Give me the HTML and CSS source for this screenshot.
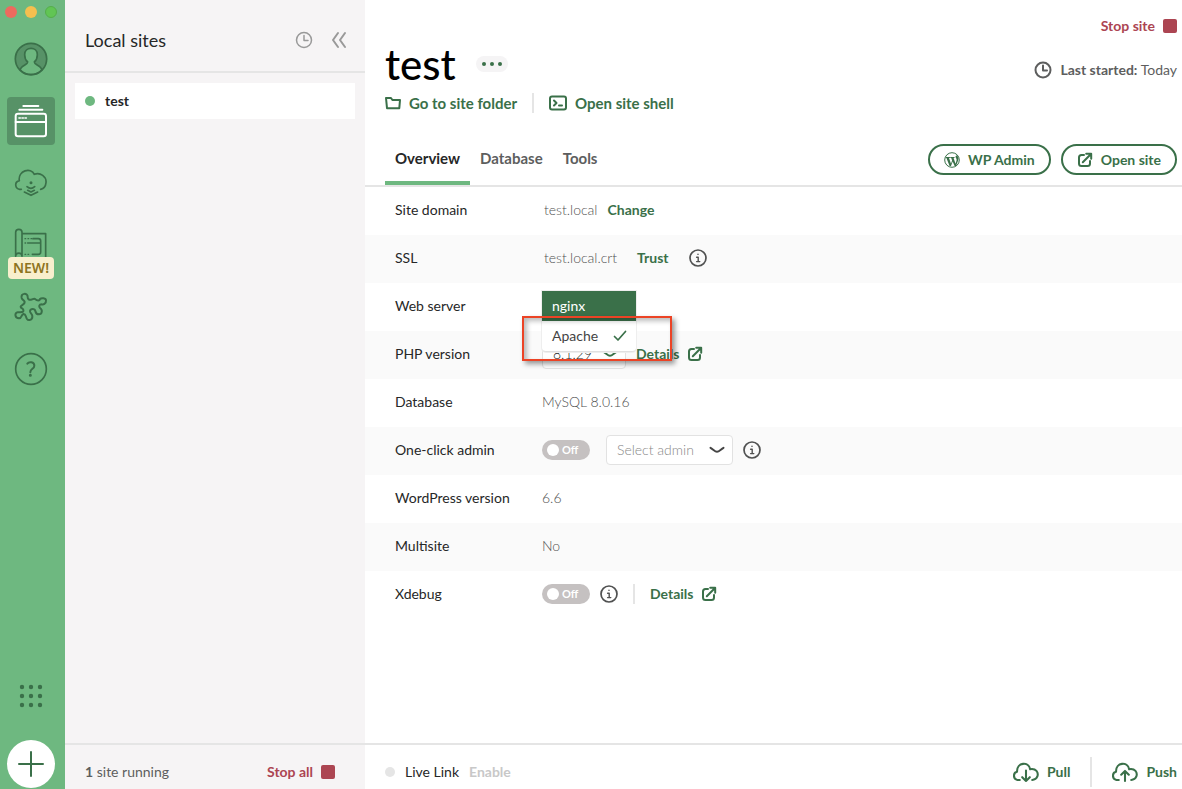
FILE: index.html
```html
<!DOCTYPE html>
<html lang="en">
<head>
<meta charset="utf-8">
<meta name="viewport" content="width=device-width, initial-scale=1">
<title>Local – test</title>
<link rel="stylesheet" href="styles.css">
</head>
<body>
<svg class="defs" width="0" height="0" aria-hidden="true">
  <symbol id="clock" viewBox="0 0 18 18"><circle cx="9" cy="9" r="7.5"/><path d="M9 4.5V9.5H13"/></symbol>
  <symbol id="info" viewBox="0 0 18 18"><circle cx="9" cy="9" r="8"/><path d="M7.6 8.2H9.2V12.6M7.6 12.6H10.8M9 5.3V5.4" stroke-width="1.4"/></symbol>
  <symbol id="external" viewBox="0 0 16 16"><path d="M7 3H4.5Q2 3 2 5.5V11.5Q2 14 4.5 14H10.5Q13 14 13 11.5V9M5.8 10.2L14 2M9.2 1.8H14.2V6.8"/></symbol>
  <symbol id="chevron" viewBox="0 0 16 8"><path d="M1.5 1.8C4 3.2 6 5.8 8 5.8S12 3.2 14.5 1.8"/></symbol>
</svg>
<div class="app">
  <nav class="rail" aria-label="Main">
    <div class="lights"><span class="light light-red"></span><span class="light light-yellow"></span><span class="light light-green"></span></div>
    <button class="rail-button" aria-label="Account">
      <svg width="34" height="34" viewBox="43 127 102 102"><circle cx="94" cy="178" r="47" fill="#579267"/><path d="M62 211C62 198 84 196 84 187C76 180 75 174 75 165C75 140 113 140 113 165C113 174 112 180 104 187C104 196 126 198 126 211Q112 225 94 225T62 211Z" fill="#6eb880" stroke-width="5"/><circle cx="94" cy="178" r="47" stroke-width="5"/></svg>
    </button>
    <button class="rail-button active" aria-label="Local sites">
      <svg width="34" height="34" viewBox="43 312 102 102"><rect x="48" y="341" width="91" height="68" rx="7" stroke-width="6"/><path d="M48 366H139M59 329H128M71 318H116" stroke-width="6"/><path d="M58 354H62M67 354H71M76 354H80" stroke-width="5"/></svg>
    </button>
    <button class="rail-button" aria-label="Cloud backups">
      <svg width="34" height="28" viewBox="43 507 102 84" stroke-width="5"><path d="M65 568H60C46 566 43 546 59 542C54 512 94 500 104 523C122 516 141 530 139 548C138 560 132 566 123 568M82 560Q94 570 105 560M74 576L94 586L114 576M84 571L94 576L104 571"/><circle cx="94" cy="548" r="2"/></svg>
    </button>
    <button class="rail-button" aria-label="Blueprints, new">
      <svg width="34" height="34" viewBox="43 55 102 102" stroke-width="5"><path d="M48 140V68C48 56 67 56 67 68V140M48 140C48 127 67 127 67 140M67 72H138V142M84 100H122M100 87H116Q123 87 123 94V127Q123 134 116 134H98"/><path d="M76 87H78M85 87H87M94 87H96M76 100H78M76 134H78M85 134H87" stroke-width="4"/></svg>
      <span class="new-badge">NEW!</span>
    </button>
    <button class="rail-button" aria-label="Add-ons">
      <svg width="34" height="30" viewBox="43 245 102 90" stroke-width="6"><path d="M66 263C62 247 85 247 84 260C84 267 89 269 94 268C99 268 101 264 106 266C113 272 120 272 121 266C125 262 139 263 139 270C140 281 130 284 126 282C118 282 117 288 121 293C130 299 127 312 118 312C110 312 108 308 107 302C105 294 93 294 91 302C90 308 99 311 98 319C98 329 86 332 82 326C77 318 79 310 71 311C64 313 67 324 58 324C45 324 44 307 54 306C64 306 73 306 71 299C69 292 63 295 63 289C64 283 76 283 75 275C74 269 68 270 66 263Z"/></svg>
    </button>
    <button class="rail-button" aria-label="Help">
      <svg width="34" height="34" viewBox="43 426 102 102"><circle cx="94" cy="477" r="46" stroke-width="5"/><path d="M83 461C88 454 104 455 104 467C104 477 92 476 92 487" stroke-width="6"/><circle cx="92" cy="496" r="2" stroke-width="5"/></svg>
    </button>
    <div class="rail-bottom">
      <button class="rail-button" aria-label="Apps">
        <svg width="24" height="24" viewBox="0 0 24 24" stroke-width="4.4"><path d="M3 3h.01M12 3h.01M21 3h.01M3 12h.01M12 12h.01M21 12h.01M3 21h.01M12 21h.01M21 21h.01"/></svg>
      </button>
      <button class="add" aria-label="Create site"><svg width="26" height="26" viewBox="0 0 26 26"><path d="M13 1V25M1 13H25"/></svg></button>
    </div>
  </nav>

  <aside class="sidebar">
    <header class="sidebar-head">
      <h2>Local sites</h2>
      <button aria-label="Recent"><svg class="icon thin" width="18" height="18"><use href="#clock"/></svg></button>
      <button aria-label="Collapse sidebar"><svg class="icon" width="16" height="18" viewBox="0 0 16 18"><path d="M7 2L2 9L7 16M14 2L9 9L14 16"/></svg></button>
    </header>
    <ul class="sites"><li><a href="#test"><span class="dot running"></span>test</a></li></ul>
    <footer class="sidebar-foot"><span><b>1</b> site running</span><button class="stop">Stop all<span class="square"></span></button></footer>
  </aside>

  <main class="main">
    <header class="site-head">
      <div class="identity">
        <div class="title-row"><h1>test</h1><button class="more" aria-label="More options"><svg width="22" height="6" viewBox="0 0 22 6"><circle cx="3" cy="3" r="2"/><circle cx="11" cy="3" r="2"/><circle cx="19" cy="3" r="2"/></svg></button></div>
        <div class="shortcuts">
          <a class="link" href="#folder"><svg class="icon" width="16" height="14" viewBox="0 0 16 14"><path d="M2 12.2L1 2H6L7.4 4H15L14.3 12.2Z"/></svg>Go to site folder</a>
          <span class="divider"></span>
          <a class="link" href="#shell"><svg class="icon" width="18" height="16" viewBox="0 0 18 16"><rect x="1" y="1.5" width="16" height="13" rx="2"/><path d="M5 5.5L7.5 8L5 10.5M10 10.5H13"/></svg>Open site shell</a>
        </div>
      </div>
      <div class="status">
        <button class="stop">Stop site<span class="square"></span></button>
        <p class="started"><svg class="icon" width="18" height="18"><use href="#clock"/></svg><span><b>Last started:</b> Today</span></p>
      </div>
    </header>

    <div class="tabbar">
      <div class="tabs" role="tablist">
        <button role="tab" aria-selected="true">Overview</button><button role="tab" aria-selected="false">Database</button><button role="tab" aria-selected="false">Tools</button>
      </div>
      <div class="actions">
        <button class="pill"><svg width="16" height="16" viewBox="0 0 16 16"><circle cx="8" cy="8" r="7.3" fill="none" stroke="currentColor"/><path d="M1.7 4.9H5.9V5.9H5L7 11.8L8.1 8.5L7.2 5.9H6.3V4.9H10.5V5.9H9.6L11.5 11.8L12.5 8.7C13 7.1 12 6.3 11.6 5.3C11.3 4.3 11.9 3.2 13.2 3.2Q14.8 5.4 14.3 8L12 14H10.6L8.7 9.4L7 14H5.6L2.4 5.9H1.7Z" fill="currentColor"/></svg>WP Admin</button>
        <button class="pill"><svg class="icon" width="16" height="16"><use href="#external"/></svg>Open site</button>
      </div>
    </div>

    <table class="settings">
      <tbody>
        <tr><th scope="row">Site domain</th><td><div class="cell inset"><span>test.local</span><a class="link" href="#change">Change</a></div></td></tr>
        <tr><th scope="row">SSL</th><td><div class="cell inset wide"><span>test.local.crt</span><a class="link" href="#trust">Trust</a><button class="info" aria-label="About SSL"><svg class="icon" width="18" height="18"><use href="#info"/></svg></button></div></td></tr>
        <tr><th scope="row">Web server</th><td><div class="cell server">
          <div class="menu" role="listbox" aria-label="Web server">
            <button class="option highlighted" role="option" aria-selected="false">nginx</button>
            <button class="option" role="option" aria-selected="true">Apache<svg class="icon" width="14" height="12" viewBox="0 0 14 12"><path d="M1.5 6.5L5 10L12.5 1.5"/></svg></button>
          </div>
          <div class="callout"></div>
        </div></td></tr>
        <tr><th scope="row"><label for="php">PHP version</label></th><td><div class="cell"><span class="select php"><select id="php"><option>8.1.29</option></select><svg class="icon" width="16" height="8"><use href="#chevron"/></svg></span><a class="link" href="#php-details">Details<svg class="icon" width="16" height="16"><use href="#external"/></svg></a></div></td></tr>
        <tr><th scope="row">Database</th><td><div class="cell">MySQL 8.0.16</div></td></tr>
        <tr><th scope="row"><label for="oneclick">One-click admin</label></th><td><div class="cell"><label class="switch"><input id="oneclick" type="checkbox"><span>Off</span></label><span class="select admin"><select aria-label="Select admin"><option>Select admin</option></select><svg class="icon" width="16" height="8"><use href="#chevron"/></svg></span><button class="info" aria-label="About one-click admin"><svg class="icon" width="18" height="18"><use href="#info"/></svg></button></div></td></tr>
        <tr><th scope="row">WordPress version</th><td><div class="cell">6.6</div></td></tr>
        <tr><th scope="row">Multisite</th><td><div class="cell">No</div></td></tr>
        <tr><th scope="row"><label for="xdebug">Xdebug</label></th><td><div class="cell"><label class="switch"><input id="xdebug" type="checkbox"><span>Off</span></label><button class="info" aria-label="About Xdebug"><svg class="icon" width="18" height="18"><use href="#info"/></svg></button><span class="divider spaced"></span><a class="link" href="#xdebug-details">Details<svg class="icon" width="16" height="16"><use href="#external"/></svg></a></div></td></tr>
      </tbody>
    </table>

    <footer class="main-foot">
      <span class="dot"></span><span class="live">Live Link</span><button class="enable" disabled>Enable</button>
      <div class="sync">
        <button class="link"><svg class="icon" width="26" height="20" viewBox="72 80 74 58"><path d="M91 132H84C70 129 72 110 83 108C82 80 117 78 121 101C138 98 146 110 142 122Q138 132 127 132M109 105V135M98 124L109 135L120 124" stroke-width="6"/></svg>Pull</button>
        <span class="divider"></span>
        <button class="link"><svg class="icon" width="26" height="20" viewBox="72 80 74 58"><path d="M91 132H84C70 129 72 110 83 108C82 80 117 78 121 101C138 98 146 110 142 122Q138 132 127 132M109 135V107M98 117L109 106L120 117" stroke-width="6"/></svg>Push</button>
      </div>
    </footer>
  </main>
</div>
</body>
</html>
```
FILE: styles.css
```css
:root {
  --green: #6eb880;
  --dark: #3a7049;
  --red: #ac4552;
  --line: #e5e5e5;
  --ink: #262727;
  --gray: #5d5e5e;
}
* { box-sizing: border-box; }
body { margin: 0; font: 14px/20px Lato, "Noto Sans", sans-serif; color: var(--ink); background: #fff; }
button, select { font: inherit; color: inherit; }
button { border: 0; padding: 0; background: none; cursor: pointer; }
a { text-decoration: none; color: inherit; }
h1, h2, p, ul { margin: 0; padding: 0; font-weight: 400; }
ul { list-style: none; }
b { font-weight: 700; }
svg { display: block; flex: none; }
.defs { position: absolute; }
.icon { fill: none; stroke: currentColor; stroke-width: 2; stroke-linecap: round; stroke-linejoin: round; }
.icon.thin { stroke-width: 1.5; }
.app { display: flex; min-height: 100vh; }

.rail { width: 65px; flex: none; background: var(--green); color: var(--dark); display: flex; flex-direction: column; padding: 6px 7px 1px 7px; }
.lights { display: flex; gap: 8px; margin: 0 0 17px -2px; }
.light { width: 12px; height: 12px; flex: none; border-radius: 50%; }
.light-red { background: #ed6a5e; }
.light-yellow { background: #f5bf4f; }
.light-green { background: #61c554; border: 1px solid #55ae4a; }
.rail-button { position: relative; width: 48px; height: 48px; margin-bottom: 14px; border-radius: 4px; display: grid; place-items: center; }
.rail-button svg { fill: none; stroke: currentColor; stroke-linecap: round; stroke-linejoin: round; }
.rail-button.active { background: #579267; color: #fff; }
.new-badge { position: absolute; left: 1px; top: 36px; width: 46px; height: 22px; border-radius: 4px; background: #f8efcd; color: #8d741f; font: 600 14px/22px "Noto Sans", sans-serif; text-align: center; }
.rail-bottom { margin-top: auto; }
.rail-bottom .rail-button { margin-bottom: 20px; }
.add { width: 48px; height: 48px; border-radius: 50%; background: #fff; display: grid; place-items: center; }
.add svg { stroke: currentColor; stroke-width: 2; stroke-linecap: round; }

.sidebar { width: 300px; flex: none; background: #f6f4f5; display: flex; flex-direction: column; }
.sidebar-head { height: 73px; flex: none; display: flex; align-items: center; gap: 18px; padding: 9px 18px 0 20px; border-bottom: 2px solid var(--line); color: #999; }
.sidebar-head h2 { flex: 1; font-size: 18px; line-height: 24px; color: var(--ink); }
.sites { flex: 1; padding: 10px; }
.sites a { display: flex; align-items: center; gap: 10px; height: 36px; padding: 0 10px; background: #fff; font-weight: 700; }
.dot { width: 10px; height: 10px; border-radius: 50%; background: #e5e5e5; }
.dot.running { background: var(--green); }
.sidebar-foot { height: 46px; display: flex; align-items: center; justify-content: space-between; padding: 10px 30px 0 20px; border-top: 2px solid var(--line); color: var(--gray); }
.stop { display: flex; align-items: center; gap: 8px; color: var(--red); font-weight: 700; }
.square { width: 14px; height: 14px; border-radius: 2px; background: var(--red); }

.main { flex: 1; min-width: 0; display: flex; flex-direction: column; }
.site-head { display: flex; justify-content: space-between; padding: 16px 5px 0 20px; }
.identity { padding-top: 22px; }
.title-row { display: flex; align-items: center; gap: 20px; }
h1 { font-size: 42px; font-weight: 500; line-height: 52px; color: #000; }
.more { width: 32px; height: 16px; border-radius: 8px; background: #f5f4f5; display: grid; place-items: center; }
.more svg { fill: var(--dark); }
.shortcuts { display: flex; align-items: center; gap: 15px; margin-top: 3px; }
.link { display: inline-flex; align-items: center; gap: 8px; color: var(--dark); font-weight: 700; }
.shortcuts .link { font-size: 15px; }
.divider { width: 2px; height: 20px; background: var(--line); }
.status { display: flex; flex-direction: column; align-items: flex-end; gap: 24px; }
.started { display: flex; align-items: center; gap: 8px; color: var(--gray); }

.tabbar { display: flex; justify-content: space-between; align-items: flex-start; padding: 0 5px 0 20px; margin-top: 19px; height: 55px; border-bottom: 2px solid var(--line); }
.tabs { display: flex; height: 53px; }
.tabs button { height: 53px; padding: 2px 10px 0; font-size: 15px; font-weight: 700; color: var(--gray); border-bottom: 4px solid transparent; }
.tabs button[aria-selected="true"] { color: var(--ink); border-color: var(--green); }
.actions { display: flex; gap: 10px; margin-top: 12px; }
.pill { display: flex; align-items: center; gap: 8px; height: 31px; padding: 0 14px; border: 2px solid var(--dark); border-radius: 16px; color: var(--dark); font-weight: 700; }

.settings { width: 100%; border-collapse: collapse; }
.settings tr { height: 48px; }
.settings tr:nth-child(even) { background: #fafafa; }
.settings th { width: 177px; padding: 0 0 2px 30px; font-weight: 400; text-align: left; }
.settings td { padding: 0; color: #505151; }
.cell { position: relative; display: flex; align-items: center; gap: 10px; height: 48px; padding-bottom: 2px; font-weight: 300; }
.inset { padding-left: 2px; }
.inset.wide { gap: 20px; }
.info { color: #505151; }
.info .icon { stroke-width: 1.7; }
.menu { position: absolute; left: 0; top: 8px; z-index: 2; width: 94px; border-radius: 0 0 4px 4px; background: #fff; border-bottom: 1px solid #e0e0e0; box-shadow: 0 0 0 1px #eee; color: #444; }
.option { display: flex; align-items: center; justify-content: space-between; width: 100%; height: 30px; padding: 0 9px 0 10px; font-weight: 400; }
.option .icon { color: var(--dark); stroke-width: 1.7; }
.option.highlighted { background: var(--dark); color: #fff; }
.callout { position: absolute; z-index: 3; left: -20px; top: 33px; width: 150px; height: 45px; border: 2px solid #ec4325; box-shadow: 3px 3px 5px #0006, inset 3px 3px 5px #0004; pointer-events: none; }
.select { position: relative; display: block; height: 30px; }
.select select { appearance: none; width: 100%; height: 30px; padding: 0 30px 0 10px; border: 1px solid #e2e2e2; border-radius: 4px; background: #fff; font-weight: 300; }
.select .icon { position: absolute; right: 8px; top: 11px; pointer-events: none; }
.select.php { width: 84px; color: var(--dark); }
.select.php select { color: var(--ink); }
.select.admin { width: 127px; margin-left: 6px; color: #444; }
.select.admin select { color: #888; }
.switch { position: relative; display: block; width: 48px; height: 20px; }
.switch input { appearance: none; display: block; width: 48px; height: 20px; margin: 0; border-radius: 10px; background: #c5c1c1; }
.switch input::before { content: ""; position: absolute; left: 5px; top: 4px; width: 12px; height: 12px; border-radius: 50%; background: #fff; }
.switch span { position: absolute; left: 20px; top: 0; color: #fff; font-size: 11px; font-weight: 700; }
.divider.spaced { margin: 0 5px; }

.main-foot { height: 46px; margin-top: auto; display: flex; align-items: center; gap: 10px; padding: 10px 5px 0 20px; border-top: 2px solid var(--line); }
.enable { color: #c8c8c8; font-weight: 700; }
.sync { margin-left: auto; display: flex; align-items: center; gap: 20px; }
.sync .divider { height: 30px; }
```
